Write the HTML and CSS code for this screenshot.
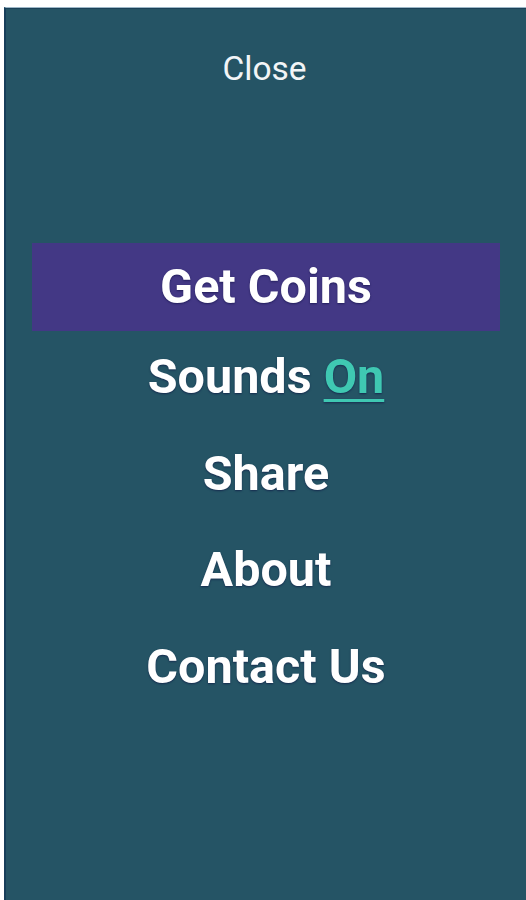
FILE: index.html
```html
<!DOCTYPE html>
<html>
<head>
<meta charset="utf-8">
<link rel="stylesheet" href="styles.css">
</head>
<body>
<div class="panel">
  <div class="close">Close</div>
  <ul class="menu">
    <li class="item item-active">Get Coins</li>
    <li class="item">Sounds <span class="toggle">On</span></li>
    <li class="item">Share</li>
    <li class="item">About</li>
    <li class="item">Contact Us</li>
  </ul>
</div>
</body>
</html>
```
FILE: styles.css
```css
html, body {
  margin: 0;
  padding: 0;
  background: #ffffff;
  height: 900px;
  overflow: hidden;
}
.panel {
  margin: 7px 0 0 4px;
  height: 893px;
  box-sizing: border-box;
  background: #255465;
  border-left: 2px solid #173e5a;
  border-top: 1px solid #9db8c8;
  box-shadow: inset 0 1px 0 #1b4158;
  font-family: Roboto, "Noto Sans", sans-serif;
  color: #ffffff;
  padding-top: 41px;
}
.close {
  text-align: center;
  font-size: 33.5px;
  line-height: 40px;
  font-weight: 400;
  color: #f2f5f7;
  padding-right: 3px;
}
.menu {
  list-style: none;
  margin: 154px 0 0 0;
  padding: 0 26px 0 26px;
}
.item {
  text-align: center;
  font-size: 48.5px;
  font-weight: 700;
  line-height: 96.5px;
  text-shadow: 0 1px 2px rgba(10, 10, 60, 0.55);
}
.item-active {
  background: #433885;
  line-height: 88px;
  margin-bottom: -2px;
}
.toggle {
  color: #3fc8b2;
  text-decoration: underline;
  text-decoration-thickness: 3px;
  text-underline-offset: 6px;
}
```
